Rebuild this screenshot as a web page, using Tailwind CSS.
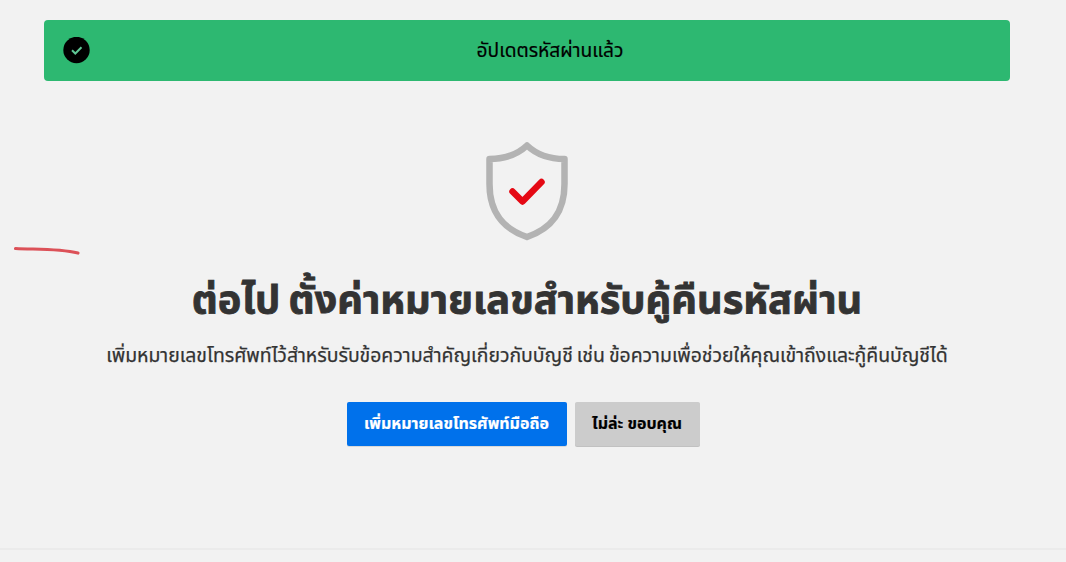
<!DOCTYPE html>
<html lang="th">
<head>
  <meta charset="UTF-8">
  <meta name="viewport" content="width=device-width, initial-scale=1.0">
  <title>อัปเดตรหัสผ่านแล้ว</title>
  <script src="https://cdn.jsdelivr.net/npm/@tailwindcss/browser@4"></script>
</head>

<body class="bg-[#f2f2f2] font-['Noto_Sans_Thai','Noto_Sans',sans-serif] text-[#333]">
  <div class="relative flex h-[562px] flex-col overflow-hidden">
    <!-- success message -->
    <div class="mt-5 ml-11 flex h-[61px] w-[966px] shrink-0 items-center rounded bg-[#2db871] pl-[19px] text-black">
      <svg class="size-[27px] shrink-0" viewBox="0 0 27 27" fill="none">
        <circle cx="13.5" cy="13" r="13.2" fill="#000" />
        <path d="M9 13.2l3.3 3.3 6.2-6.2" stroke="#5fc795" stroke-width="2" />
      </svg>
      <p class="flex-1 pt-1 text-center text-[19.2px] [-webkit-text-stroke:0.2px_#000]">อัปเดตรหัสผ่านแล้ว</p>
    </div>

    <main class="flex w-[1054px] flex-1 flex-col items-center pt-[60px]">
      <!-- shield -->
      <svg class="h-[100px] w-[84px] shrink-0" viewBox="0 0 84 100" fill="none">
        <path d="M42 4.5C33 13 19 18 4.5 18v25C4.5 73 19 88 42 96c23-8 37.5-23 37.5-53V18C65 18 51 13 42 4.5Z" stroke="#b3b3b3" stroke-width="6.5" stroke-linejoin="round" />
        <path d="M27.5 50.500l10 10L56.500 41" stroke="#e50914" stroke-width="6.5" stroke-linecap="round" stroke-linejoin="round" />
      </svg>
      <h1 class="mt-[30px] h-[58px] text-[39.8px] leading-[60px] font-bold whitespace-nowrap [word-spacing:-2px] [-webkit-text-stroke:0.8px_#333]">ต่อไป ตั้งค่าหมายเลขสำหรับคู้คืนรหัสผ่าน</h1>
      <p class="mt-[13px] h-7 text-[19.4px] leading-7 whitespace-nowrap [word-spacing:-1px] [-webkit-text-stroke:0.25px_#333]">เพิ่มหมายเลขโทรศัพท์ไว้สำหรับรับข้อความสำคัญเกี่ยวกับบัญชี เช่น ข้อความเพื่อช่วยให้คุณเข้าถึงและกู้คืนบัญชีได้</p>

      <!-- buttons -->
      <div class="mt-8 mr-2 flex gap-2 text-base leading-6 font-bold whitespace-nowrap">
        <button type="button" class="h-11 w-[220px] rounded-xs bg-[#0071eb] text-white shadow-[0_1px_0_rgb(0_0_0/0.1)] [-webkit-text-stroke:0.2px_#fff]">เพิ่มหมายเลขโทรศัพท์มือถือ</button>
        <button type="button" class="h-11 w-[125px] rounded-xs bg-[#ccc] text-black shadow-[0_1px_0_rgb(0_0_0/0.2)] [-webkit-text-stroke:0.2px_#000]">ไม่ล่ะ ขอบคุณ</button>
      </div>
    </main>

    <div class="h-[14px] shrink-0 border-t-2 border-[#ebebeb]"></div>

    <!-- pen stroke -->
    <svg class="absolute top-[244px] left-[12px] h-3 w-[70px]" viewBox="0 0 70 12" fill="none">
      <path d="M3.5 4.5C26 5.500 47 4.500 66 9" stroke="#dc5158" stroke-width="3.2" stroke-linecap="round" />
    </svg>
  </div>
</body>
</html>
